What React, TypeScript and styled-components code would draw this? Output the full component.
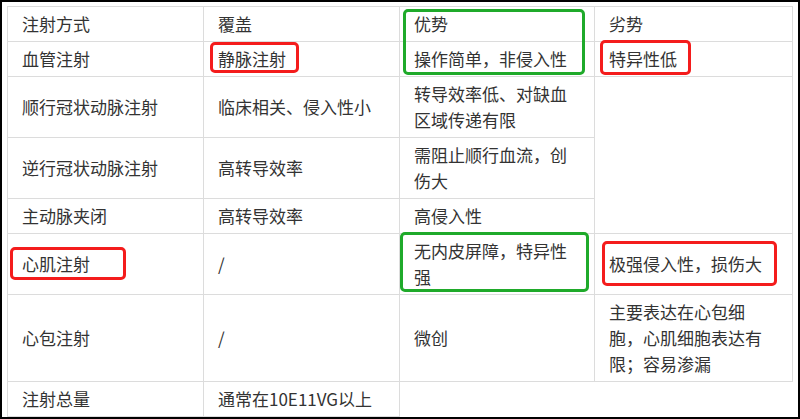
import styled, { createGlobalStyle } from 'styled-components';

const GlobalStyle = createGlobalStyle`
  html, body {
    margin: 0;
    padding: 0;
    background: #fff;
    overflow: hidden;
  }
  body {
    font-family: "Noto Sans CJK SC", "Noto Sans", sans-serif;
  }
`;

export const Frame = styled.div`
  position: relative;
  width: 800px;
  height: 419px;
  box-sizing: border-box;
  border: 2px solid #000;
  padding: 4px 0 0 5px;
  background: #fff;
  overflow: hidden;
`;

export const Table = styled.table`
  width: 785px;
  table-layout: fixed;
  border-collapse: collapse;
  color: #333;
  font-size: 17px;
  line-height: 26px;
`;

export const Col = styled.col<{ $w: number }>`
  width: ${({ $w }) => $w}px;
`;

export const Cell = styled.td<{ $right?: number }>`
  border: 1px solid #dcdcdc;
  padding: 4px ${({ $right }) => $right ?? 14}px 4px 14px;
  vertical-align: middle;
  text-align: left;
`;

export const Mark = styled.div<{
  $tone: 'red' | 'green';
  $x: number;
  $y: number;
  $w: number;
  $h: number;
}>`
  position: absolute;
  left: ${({ $x }) => $x}px;
  top: ${({ $y }) => $y}px;
  width: ${({ $w }) => $w}px;
  height: ${({ $h }) => $h}px;
  box-sizing: border-box;
  border: 3px solid ${({ $tone }) => ($tone === 'red' ? '#f41c1c' : '#1faa2a')};
  border-radius: 5px;
  pointer-events: none;
`;

export default function App() {
  return (
    <>
      <GlobalStyle />
      <Frame>
        <Table>
          <colgroup>
            <Col $w={196} />
            <Col $w={196} />
            <Col $w={195} />
            <Col $w={198} />
          </colgroup>
          <tbody>
            <tr>
              <Cell>注射方式</Cell>
              <Cell>覆盖</Cell>
              <Cell>优势</Cell>
              <Cell $right={16}>劣势</Cell>
            </tr>
            <tr>
              <Cell>血管注射</Cell>
              <Cell>静脉注射</Cell>
              <Cell>操作简单，非侵入性</Cell>
              <Cell $right={16}>特异性低</Cell>
            </tr>
            <tr>
              <Cell>顺行冠状动脉注射</Cell>
              <Cell>临床相关、侵入性小</Cell>
              <Cell>转导效率低、对缺血区域传递有限</Cell>
              <Cell $right={16} rowSpan={3} />
            </tr>
            <tr>
              <Cell>逆行冠状动脉注射</Cell>
              <Cell>高转导效率</Cell>
              <Cell>需阻止顺行血流，创伤大</Cell>
            </tr>
            <tr>
              <Cell>主动脉夹闭</Cell>
              <Cell>高转导效率</Cell>
              <Cell>高侵入性</Cell>
            </tr>
            <tr>
              <Cell>心肌注射</Cell>
              <Cell>/</Cell>
              <Cell>无内皮屏障，特异性强</Cell>
              <Cell $right={16}>极强侵入性，损伤大</Cell>
            </tr>
            <tr>
              <Cell>心包注射</Cell>
              <Cell>/</Cell>
              <Cell>微创</Cell>
              <Cell $right={16}>主要表达在心包细胞，心肌细胞表达有限；容易渗漏</Cell>
            </tr>
            <tr>
              <Cell>注射总量</Cell>
              <Cell>通常在10E11VG以上</Cell>
            </tr>
          </tbody>
        </Table>
        <Mark $tone="red" $x={208} $y={40} $w={89} $h={31} />
        <Mark $tone="green" $x={401} $y={7} $w={182} $h={66} />
        <Mark $tone="red" $x={598} $y={38} $w={91} $h={35} />
        <Mark $tone="red" $x={8} $y={245} $w={116} $h={33} />
        <Mark $tone="green" $x={398} $y={230} $w={189} $h={60} />
        <Mark $tone="red" $x={600} $y={239} $w={175} $h={45} />
      </Frame>
    </>
  );
}
